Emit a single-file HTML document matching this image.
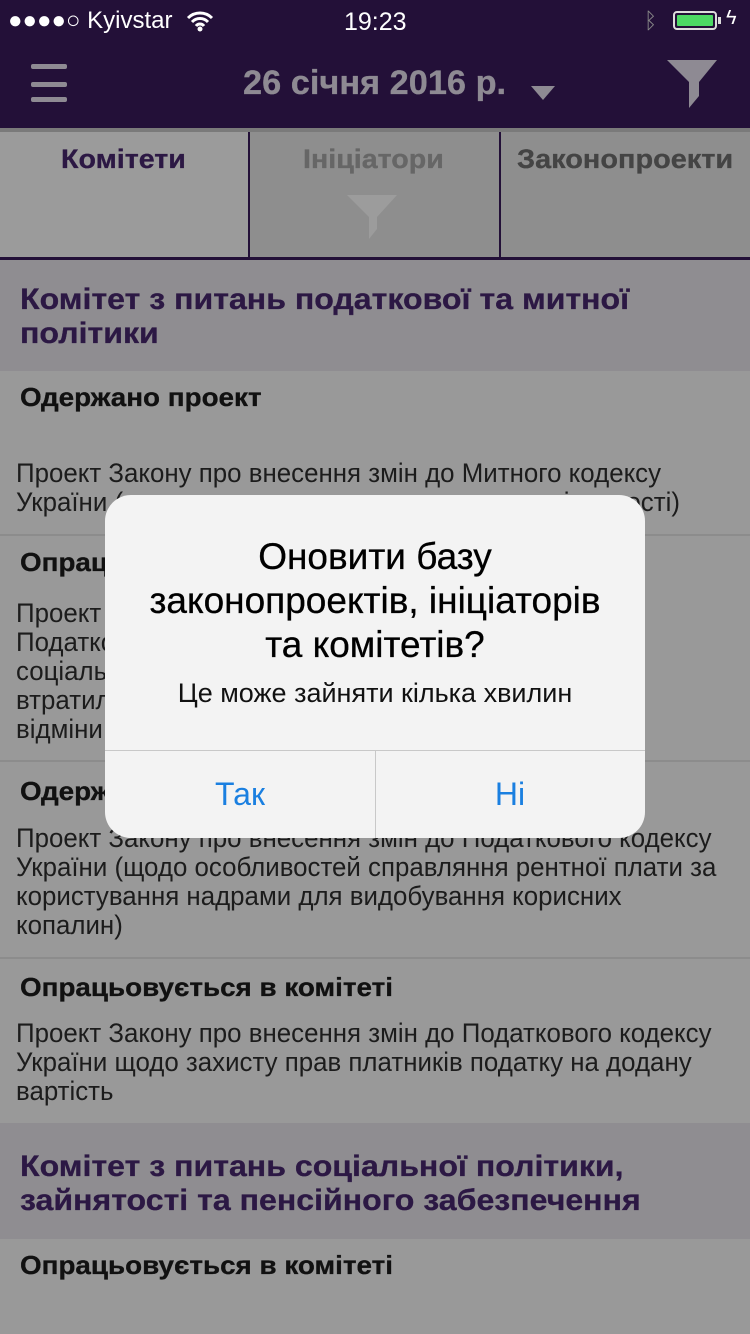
<!DOCTYPE html>
<html><head><meta charset="utf-8"><style>
*{margin:0;padding:0;box-sizing:border-box}
body{width:750px;height:1334px;overflow:hidden;position:relative;background:#999;font-family:"Liberation Sans","Noto Sans CJK SC",sans-serif}
.a{position:absolute;white-space:nowrap}
.n{transform-origin:0 0}
.t{font-size:26.5px;color:#1c1c1c;line-height:29px;transform:scaleX(.976)}
.h{font-size:26px;font-weight:bold;color:#111;transform:scaleX(1.07);-webkit-text-stroke:.3px #111}
.s{font-size:30px;font-weight:bold;color:#2c1844;line-height:34px;transform:scaleX(1.07);-webkit-text-stroke:.3px #2c1844}
.sep{position:absolute;left:0;width:750px;height:2px;background:#8c8c8c}
</style></head><body>
<div class="a" style="left:0;top:0;width:750px;height:128px;background:#231038"></div>
<div class="a n" style="left:8px;top:7px;font-size:24px;color:#fff">●●●●○ Kyivstar</div>
<svg class="a" style="left:186px;top:10px" width="28" height="22" viewBox="0 0 28 22"><path d="M2 8a17 17 0 0 1 24 0M6 12a11 11 0 0 1 16 0M10 16a5 5 0 0 1 8 0" stroke="#fff" stroke-width="3" fill="none"/><circle cx="14" cy="19" r="2.5" fill="#fff"/></svg>
<div class="a" style="left:344px;top:8px;font-size:25px;color:#fff">19:23</div>
<div class="a" style="left:644px;top:8px;font-size:22px;color:#888">ᛒ</div>
<div class="a" style="left:673px;top:11px;width:44px;height:19px;border:2px solid #ddd;border-radius:4px;padding:2px"><div style="width:100%;height:100%;background:#4cd964;border-radius:1px"></div></div>
<div class="a" style="left:718px;top:17px;width:3px;height:7px;background:#ddd"></div>
<div class="a" style="left:726px;top:7px;font-size:20px;color:#fff">ϟ</div>
<div class="a" style="left:31px;top:64px;width:36px;height:5px;background:#8e8a93;border-radius:2px"></div>
<div class="a" style="left:31px;top:82px;width:36px;height:5px;background:#8e8a93;border-radius:2px"></div>
<div class="a" style="left:31px;top:97px;width:36px;height:5px;background:#8e8a93;border-radius:2px"></div>
<div class="a n" style="left:243px;top:64px;font-size:34px;font-weight:bold;color:#8e8a93;transform:scaleX(1.01);-webkit-text-stroke:.3px #8e8a93">26 січня 2016 р.</div>
<svg class="a" style="left:531px;top:86px" width="24" height="14"><path d="M0 0h24L12 14z" fill="#8e8a93"/></svg>
<svg class="a" style="left:667px;top:60px" width="50" height="48"><path d="M0 0h50L32 22V36L22 48V22z" fill="#8e8a93"/></svg>
<div class="a" style="left:0;top:128px;width:750px;height:4px;background:#7a7a7a"></div>
<div class="a" style="left:0;top:132px;width:248px;height:126px;background:#9b9b9b"></div>
<div class="a" style="left:250px;top:132px;width:500px;height:126px;background:#8e8e8e"></div>
<div class="a" style="left:248px;top:132px;width:2px;height:126px;background:#231038"></div>
<div class="a" style="left:499px;top:132px;width:2px;height:126px;background:#231038"></div>
<div class="a" style="left:0;top:257px;width:750px;height:3px;background:#231038"></div>
<div class="a n" style="left:61px;top:144px;font-size:27px;font-weight:bold;color:#2c1844;transform:scaleX(1.06);-webkit-text-stroke:.3px #2c1844">Комітети</div>
<div class="a n" style="left:303px;top:144px;font-size:27px;font-weight:bold;color:#666;transform:scaleX(1.06);-webkit-text-stroke:.3px #666">Ініціатори</div>
<div class="a n" style="left:517px;top:144px;font-size:27px;font-weight:bold;color:#444;transform:scaleX(1.07);-webkit-text-stroke:.3px #444">Законопроекти</div>
<svg class="a" style="left:347px;top:195px" width="50" height="44"><path d="M0 0h50L30 22V34L22 44V22z" fill="#9c9c9c"/></svg>
<div class="a" style="left:0;top:260px;width:750px;height:111px;background:#8f8d91"></div>
<div class="a n s" style="left:20px;top:283px">Комітет з питань податкової та митної<br>політики</div>
<div class="a n h" style="left:20px;top:382px">Одержано проект</div>
<div class="a n t" style="left:16px;top:459px">Проект Закону про внесення змін до Митного кодексу<br>України (щодо спрощення митних процедур діяльності)</div>
<div class="sep" style="top:534px"></div>
<div class="a n h" style="left:20px;top:547px">Опрацьовується в комітеті</div>
<div class="a n t" style="left:16px;top:599px">Проект Закону про внесення змін до<br>Податкового кодексу України щодо<br>соціальних пільг які<br>втратили чинність у зв'язку з прийняттям<br>відміни</div>
<div class="sep" style="top:760px"></div>
<div class="a n h" style="left:20px;top:776px">Одержано проект</div>
<div class="a n t" style="left:16px;top:824px">Проект Закону про внесення змін до Податкового кодексу<br>України (щодо особливостей справляння рентної плати за<br>користування надрами для видобування корисних<br>копалин)</div>
<div class="sep" style="top:957px"></div>
<div class="a n h" style="left:20px;top:972px">Опрацьовується в комітеті</div>
<div class="a n t" style="left:16px;top:1019px">Проект Закону про внесення змін до Податкового кодексу<br>України щодо захисту прав платників податку на додану<br>вартість</div>
<div class="a" style="left:0;top:1123px;width:750px;height:116px;background:#8f8d91"></div>
<div class="a n s" style="left:20px;top:1150px">Комітет з питань соціальної політики,<br>зайнятості та пенсійного забезпечення</div>
<div class="a n h" style="left:20px;top:1250px">Опрацьовується в комітеті</div>
<div class="a" style="left:105px;top:495px;width:540px;height:343px;background:#f3f3f3;border-radius:26px;overflow:hidden">
<div style="position:absolute;top:40px;width:540px;text-align:center;font-size:37px;line-height:44px;color:#000;-webkit-text-stroke:.3px #000">Оновити базу<br>законопроектів, ініціаторів<br>та комітетів?</div>
<div style="position:absolute;top:183px;width:540px;text-align:center;font-size:27px;color:#111">Це може зайняти кілька хвилин</div>
<div style="position:absolute;top:255px;left:0;width:540px;height:1px;background:#c8c8c8"></div>
<div style="position:absolute;top:255px;left:270px;width:1px;height:90px;background:#c8c8c8"></div>
<div style="position:absolute;top:281px;left:0;width:270px;text-align:center;font-size:32px;color:#1a7fe0">Так</div>
<div style="position:absolute;top:281px;left:270px;width:270px;text-align:center;font-size:32px;color:#1a7fe0">Ні</div>
</div>
</body></html>
